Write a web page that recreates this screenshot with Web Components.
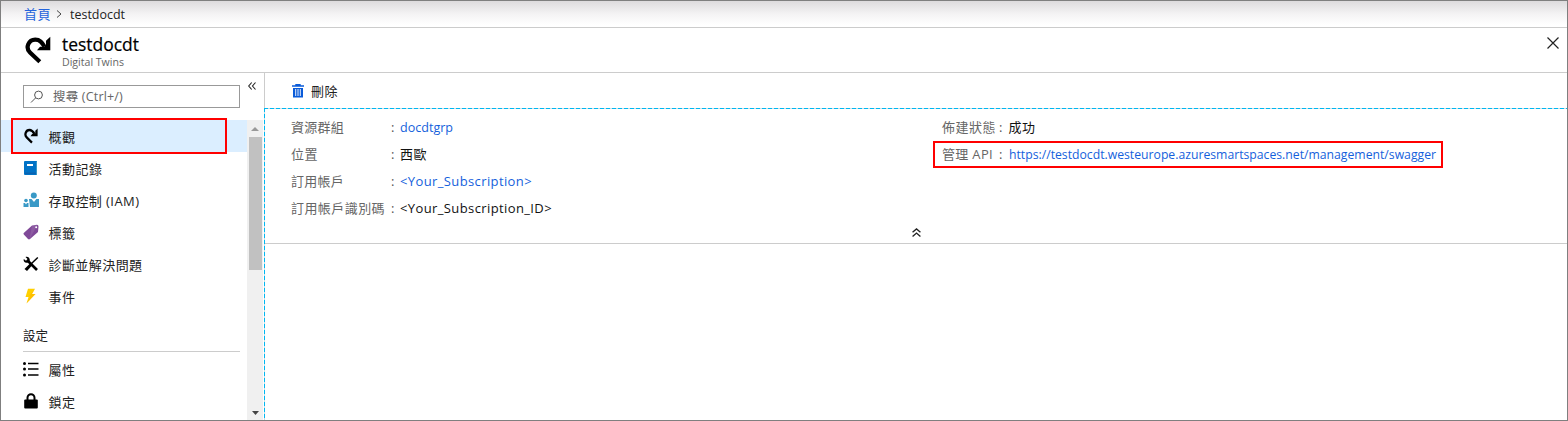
<!DOCTYPE html>
<html lang="zh-Hant"><head><meta charset="utf-8"><title>testdocdt</title>
<style>
html,body{margin:0;height:100%;overflow:hidden}
body{font-family:"Open Sans","Noto Sans CJK TC",sans-serif;font-size:13px;color:#222;background:#fff}
</style></head><body><portal-page></portal-page>
<script>
const define=(name,html,init)=>customElements.define(name,class extends HTMLElement{
  connectedCallback(){
    if(this.shadowRoot)return;
    const t=document.createElement('template');t.innerHTML=html;
    this.attachShadow({mode:'open'}).append(t.content.cloneNode(true));
    if(init)init(this,this.shadowRoot);
  }
});

/* Single-line label; "w" is its advance width: letters are spread to reach it, or condensed to fit. */
define('fit-text','<style>:host{display:block;white-space:nowrap;flex:none;line-height:20px}span{display:inline-block;transform-origin:0 50%}</style><span><slot></slot></span>',(el,root)=>{
  const w=+el.getAttribute('w');
  if(w){
    const s=root.querySelector('span'),n=[...el.textContent].length,d=w-s.getBoundingClientRect().width;
    if(d>=0)s.style.letterSpacing=d/n+'px';
    else s.style.transform='scaleX('+w/(w-d)+')';
    el.style.width=w+'px';
  }
});

const icons={
 twin:['0 0 26 28','<path d="M14.800 25.800 5 16.500A7.500 7.500 0 0 1 10.200 3.600C15 3.600 17 6.500 19.500 10.500" fill="none" stroke="#000" stroke-width="4.200"/><path d="M25.300.8V14.300H12l3-3.600h4L21 9V4.800z" fill="#000"/>'],
 book:['0 0 16 16','<path d="M2 1h12v14H2a1 1 0 0 1-1-1V2a1 1 0 0 1 1-1z" fill="#0072c6"/><path d="M2 12.500h11V14H2z" fill="#0a62b0"/><path d="M13 1.500h1V15h-1z" fill="#3999c6"/><path d="M4 4h6v2H4z" fill="#fff"/>'],
 iam:['0 0 16 16','<g fill="#3999c6"><circle cx="10.800" cy="3.500" r="3"/><path d="M6 7h10v8H7z"/><circle cx="3" cy="8.500" r="1.800"/><path d="M.5 11h5v4h-5z"/></g><path d="M8.500 7h4.800L11 10z" fill="#fff"/><path d="M2 11h2l-1 1.500z" fill="#fff"/>'],
 tag:['0 0 16 16','<path d="M9 1.500 14 .8Q15.500 1 15.500 2.500L15 8 7 15Q6 15.800 5 15L.8 10.500Q0 9.500 1 8.700z" fill="#804998"/><path d="M9 1.500 14.500 1l-8 14z" fill="#fff" opacity=".1"/><circle cx="13.200" cy="3.300" r="1" fill="#fff"/>'],
 tools:['0 0 16 16','<path d="M4.500 4.500 14 14" stroke="#000" stroke-width="2.600"/><path d="M2.500 1 4.500 3 3 4.800.8 3C0 5 1.500 7.300 4.500 6.800L6.800 4.500C7 2 5 .3 2.500 1z" fill="#000"/><path d="M14.800 1.500 8 8" stroke="#000" stroke-width="1.500"/><path d="M7 7.500 9 9.500 4 15 1.500 13z" fill="#000"/>'],
 bolt:['0 0 16 16','<path d="M5 .8h7L9 6H12.500L3.500 15.500 5.500 9H2.500z" fill="#ffd000"/><path d="M12 .8 9 6H12.500L3.500 15.500 7.500 8H6z" fill="#ff9c00" opacity=".3"/>'],
 list:['0 0 16 16','<path d="M5 2.500h10.500M5 8h10.500M5 14h10.500" stroke="#000" stroke-width="1.500"/><g fill="#000"><circle cx="1.500" cy="2.500" r="1.500"/><circle cx="1.500" cy="8" r="1.500"/><circle cx="1.500" cy="14" r="1.500"/></g>'],
 lock:['0 0 16 16','<path d="M4.500 8V4.800a3.500 3.500 0 0 1 7 0V8" fill="none" stroke="#000" stroke-width="2"/><rect x="1.200" y="6.500" width="13.600" height="9" rx="1" fill="#000"/>'],
 trash:['0 0 12 14','<path d="M0 2h12M4 2V.7h4V2" fill="none" stroke="#0a5bd9" stroke-width="1.400"/><path d="M1 4h10v9.500H1z" fill="#0a5bd9"/><path d="M3.700 5v7M6 5v7M8.300 5v7" stroke="#fff" stroke-width=".9"/>'],
 search:['0 0 14 14','<circle cx="8.500" cy="5" r="3.900" fill="none" stroke="#555"/><path d="M5.500 8 1 12.500" stroke="#555"/>'],
 close:['0 0 12 12','<path d="m.5.5 11 11m0-11-11 11" stroke="#222" stroke-width="1.200"/>'],
 fold:['0 0 8 8','<path d="M3.700.5.700 4l3 3.500M7.500.5l-3 3.500 3 3.500" fill="none" stroke="#222" stroke-width="1.100"/>'],
 up:['0 0 8 8','<path d="M.5 3.800 4 .8l3.500 3M.5 7.500 4 4.500l3.500 3" fill="none" stroke="#222" stroke-width="1.200"/>'],
 crumb:['0 0 6 8','<path d="m1 .5 4 3.500-4 3.500" fill="none" stroke="#444"/>'],
 au:['0 0 8 4','<path d="m0 4 4-4 4 4z" fill="#999"/>'],
 ad:['0 0 8 4','<path d="m0 0 4 4 4-4z" fill="#444"/>']
};
define('ui-icon','<style>:host{display:block;flex:none}svg{display:block;width:100%;height:100%}</style><svg preserveAspectRatio="none"></svg>',(el,root)=>{
  const icon=icons[el.getAttribute('name')],s=root.querySelector('svg');
  if(icon){s.setAttribute('viewBox',icon[0]);s.innerHTML=icon[1];}
  el.style.width=(el.getAttribute('w')||16)+'px';el.style.height=(el.getAttribute('h')||16)+'px';
});

define('crumb-bar',`<style>:host{display:flex;box-sizing:border-box;height:27px;padding:0 0 0 23px;align-items:center;border-bottom:1px solid #ccc;background:linear-gradient(#dddbdd,#f4f3f4 50%,#fff 92%)}
.h{color:#2464dc;font-size:13px}ui-icon{margin:0 8px 0 5px}.t{font-size:12.500px;margin-top:1px}</style>
<fit-text class="h" w="27">首頁</fit-text><ui-icon name="crumb" w="6" h="8"></ui-icon><fit-text class="t" w="55">testdocdt</fit-text>`);

define('blade-header',`<style>:host{display:flex;box-sizing:border-box;height:45px;border-bottom:1px solid #ccc;padding:8px 8px 0 24px}
.n{margin-left:11px;flex:1}.a{font-size:18px;font-weight:500;color:#000;line-height:18px;margin-top:-1px;-webkit-text-stroke:.2px #000}.b{font-size:11px;line-height:14px;margin-top:2px;color:#666}.x{margin-top:1px}</style>
<ui-icon name="twin" w="26" h="28"></ui-icon><div class="n"><fit-text class="a" w="77">testdocdt</fit-text><fit-text class="b" w="62">Digital Twins</fit-text></div><ui-icon class="x" name="close" w="12" h="12"></ui-icon>`);

define('search-row',`<style>:host{display:flex;height:47px;box-sizing:border-box;padding:12px 0 0 22px;align-items:flex-start}
.box{display:flex;align-items:center;box-sizing:border-box;width:217px;height:23px;border:1px solid #999;padding-left:6px;color:#666}
.t{margin-left:9px;font-size:12.500px}.f{margin:-3px 0 0 8px}</style>
<div class="box"><ui-icon name="search" w="14" h="14"></ui-icon><fit-text class="t" w="70">搜尋 (Ctrl+/)</fit-text></div><ui-icon class="f" name="fold" w="8" h="8"></ui-icon>`);

define('menu-item',`<style>:host{display:flex;position:relative;height:32px;align-items:center;padding-left:22px}
:host([selected]){background:#dbeeff}:host([selected])::after{content:"";position:absolute;left:10px;top:-2px;width:212px;height:32px;border:2px solid #f00}
.i{display:flex;width:16px;justify-content:center}fit-text{margin:1px 0 0 9.500px}</style><div class="i"></div><fit-text><slot></slot></fit-text>`,(el,root)=>{
  const i=document.createElement('ui-icon'),name=el.getAttribute('icon');
  i.setAttribute('name',name);
  if(name==='twin')i.setAttribute('w',14);
  root.querySelector('.i').append(i);
});

define('scroll-bar',`<style>:host{display:flex;flex-direction:column;align-items:center;width:16px;box-sizing:border-box;background:#f0f0f0;padding:7px 0 5px}
.th{width:13px;height:133px;background:#c1c1c1;margin-top:6px}.s{flex:1}</style><ui-icon name="au" w="8" h="4"></ui-icon><div class="th"></div><div class="s"></div><ui-icon name="ad" w="7" h="4"></ui-icon>`);

define('side-menu',`<style>:host{display:flex;flex-direction:column;width:263px;flex:none}.b{display:flex;flex:1;min-height:0}.m{width:246px}
.g{height:40px;box-sizing:border-box;margin:0 7px 1px 22px;padding-top:13px;border-bottom:1px solid #ccc}.r{flex:none}</style>
<search-row></search-row><div class="b"><div class="m">
<menu-item icon="twin" selected><fit-text w="27">概觀</fit-text></menu-item>
<menu-item icon="book"><fit-text w="54">活動記錄</fit-text></menu-item>
<menu-item icon="iam"><fit-text w="91">存取控制 (IAM)</fit-text></menu-item>
<menu-item icon="tag"><fit-text w="27">標籤</fit-text></menu-item>
<menu-item icon="tools"><fit-text w="94">診斷並解決問題</fit-text></menu-item>
<menu-item icon="bolt"><fit-text w="27">事件</fit-text></menu-item>
<div class="g"><fit-text w="25">設定</fit-text></div>
<menu-item icon="list"><fit-text w="27">屬性</fit-text></menu-item>
<menu-item icon="lock"><fit-text w="27">鎖定</fit-text></menu-item>
</div><scroll-bar class="r"></scroll-bar></div>`);

define('info-row',`<style>:host{display:flex;height:27px;box-sizing:border-box;padding-top:3px;position:relative}
.k{width:var(--kw,100px);color:#666}.k,.c,.v{flex:none}.c{width:var(--cw,9px);color:#555}.v{color:#111}:host([link]) .v{color:#155fdc}
:host([marked])::after{content:"";position:absolute;left:-9px;top:0;width:506px;height:23px;border:2px solid #f00}</style>
<div class="k"><slot name="k"></slot></div><fit-text class="c">:</fit-text><div class="v"><slot></slot></div>`);

define('essentials-panel',`<style>:host{display:grid;grid-template-columns:651px 1fr;box-sizing:border-box;height:135px;padding:5px 0 0 26px;border-bottom:1px solid #ccc;position:relative}
.r{--kw:57px;--cw:9.500px}.up{position:absolute;left:647px;top:119px}</style>
<div>
<info-row link><fit-text slot="k" w="53">資源群組</fit-text><fit-text w="53">docdtgrp</fit-text></info-row>
<info-row><fit-text slot="k" w="27">位置</fit-text><fit-text w="27">西歐</fit-text></info-row>
<info-row link><fit-text slot="k" w="53">訂用帳戶</fit-text><fit-text w="132">&lt;Your_Subscription&gt;</fit-text></info-row>
<info-row><fit-text slot="k" w="94">訂用帳戶識別碼</fit-text><fit-text w="152">&lt;Your_Subscription_ID&gt;</fit-text></info-row>
</div><div class="r">
<info-row><fit-text slot="k" w="54">佈建狀態</fit-text><fit-text w="27">成功</fit-text></info-row>
<info-row link marked><fit-text slot="k" w="51">管理 API</fit-text><fit-text w="427">https://testdocdt.westeurope.azuresmartspaces.net/management/swagger</fit-text></info-row>
</div><ui-icon class="up" name="up" w="9" h="9"></ui-icon>`);

define('resource-view',`<style>:host{display:flex;flex-direction:column;flex:1;min-width:0}
.bar{display:flex;align-items:center;height:35px;box-sizing:border-box;border-left:1px solid #ccc;padding-left:27px}.bar fit-text{margin-left:7px}
.c{flex:1;padding:1px 0 0 1px;background:repeating-linear-gradient(90deg,#00b7f1 0 4px,#c9dce4 4px 6px) 0 0/100% 1px no-repeat,repeating-linear-gradient(#00b7f1 0 4px,#c9dce4 4px 6px) 0 0/1px 100% no-repeat}</style>
<div class="bar"><ui-icon name="trash" w="12" h="14"></ui-icon><fit-text w="27">刪除</fit-text></div><div class="c"><essentials-panel></essentials-panel></div>`);

define('portal-page',`<style>:host{display:flex;flex-direction:column;width:1568px;height:421px;box-sizing:border-box;border:1px solid #7f7f7f;overflow:hidden}.b{display:flex;flex:1;min-height:0}</style>
<crumb-bar></crumb-bar><blade-header></blade-header><div class="b"><side-menu></side-menu><resource-view></resource-view></div>`);
</script></body></html>
